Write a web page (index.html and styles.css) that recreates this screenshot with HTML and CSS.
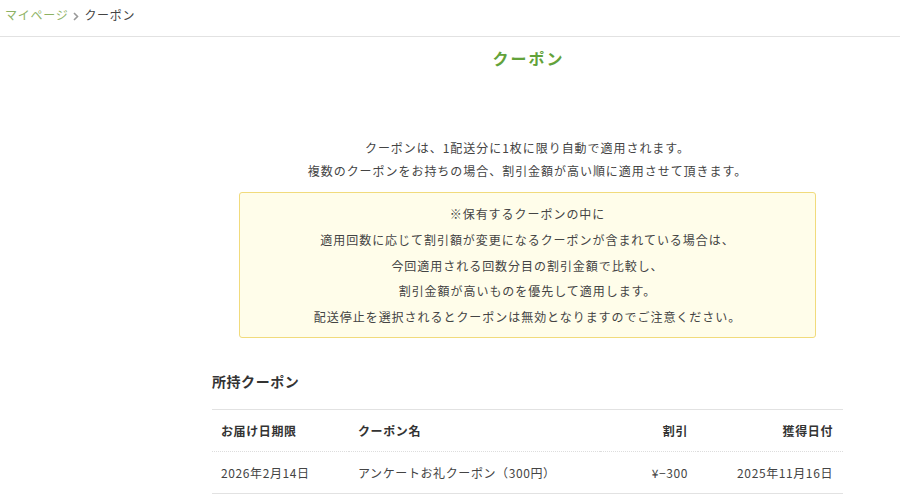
FILE: index.html
```html
<!DOCTYPE html>
<html lang="ja">
<head>
  <meta charset="UTF-8" />
  <meta name="viewport" content="width=device-width, initial-scale=1.0" />
  <title>クーポン | マイページ</title>
  <link rel="stylesheet" href="styles.css">
</head>
<body>
  <!-- Breadcrumb -->
  <nav class="breadcrumb">
    <a href="#">マイページ</a>
    <span class="crumb-sep">
      <svg width="6" height="9" viewBox="0 0 6 9"><path d="M1 1l3.5 3.5L1 8" fill="none" stroke="#999" stroke-width="1.6"/></svg>
    </span>
    <span class="crumb-current">クーポン</span>
  </nav>

  <main class="container">
    <h1 class="page-title">クーポン</h1>

    <div class="lead">
      <p>クーポンは、1配送分に1枚に限り自動で適用されます。</p>
      <p>複数のクーポンをお持ちの場合、割引金額が高い順に適用させて頂きます。</p>
    </div>

    <!-- Notice -->
    <div class="notice">
      <p>※保有するクーポンの中に</p>
      <p>適用回数に応じて割引額が変更になるクーポンが含まれている場合は、</p>
      <p>今回適用される回数分目の割引金額で比較し、</p>
      <p>割引金額が高いものを優先して適用します。</p>
      <p>配送停止を選択されるとクーポンは無効となりますのでご注意ください。</p>
    </div>

    <!-- Owned coupons -->
    <h2 class="section-title">所持クーポン</h2>
    <table class="coupon-table">
      <thead>
        <tr>
          <th class="col-limit">お届け日期限</th>
          <th class="col-name">クーポン名</th>
          <th class="col-discount num">割引</th>
          <th class="col-date num">獲得日付</th>
        </tr>
      </thead>
      <tbody>
        <tr>
          <td>2026年2月14日</td>
          <td>アンケートお礼クーポン（300円）</td>
          <td class="num">¥−300</td>
          <td class="num">2025年11月16日</td>
        </tr>
      </tbody>
    </table>
  </main>
</body>
</html>
```

FILE: styles.css
```css
/* Global */
* {
  box-sizing: border-box;
}
body {
  margin: 0;
  background: #fff;
  color: #333;
  font-family: "Noto Sans CJK JP", "Noto Sans", sans-serif;
  font-size: 12px;
  letter-spacing: 0.08em;
}
p {
  margin: 0;
}

/* Breadcrumb */
.breadcrumb {
  height: 37px;
  padding: 6px 5px 0;
  border-bottom: 1px solid #e2e2e2;
  display: flex;
  align-items: flex-start;
  gap: 5px;
  line-height: 18px;
  letter-spacing: 0.06em;
}
.breadcrumb a {
  color: #8db264;
  text-decoration: none;
}
.crumb-sep {
  display: flex;
  align-items: center;
  height: 18px;
  padding-top: 2px;
}
.crumb-current {
  color: #444;
}

/* Main column */
.container {
  width: 631px;
  margin-left: 212px;
}
.page-title {
  margin: 9px 0 0;
  padding-left: 2px;
  text-align: center;
  color: #62a23a;
  font-size: 16px;
  line-height: 24px;
  font-weight: bold;
  letter-spacing: 2px;
}
.lead {
  margin-top: 66px;
  text-align: center;
  line-height: 23px;
  color: #444;
}

/* Notice box */
.notice {
  width: 577px;
  margin: 10px auto 0;
  padding: 8px 10px 7px;
  background: #fffdea;
  border: 1px solid #f1db7c;
  border-radius: 3px;
  text-align: center;
  line-height: 25.8px;
  color: #444;
}

/* Coupon table */
.section-title {
  margin: 33px 0 0;
  font-size: 14px;
  line-height: 20px;
  font-weight: bold;
  color: #333;
  letter-spacing: 0.04em;
}
.coupon-table {
  width: 100%;
  margin-top: 18px;
  border-collapse: collapse;
  border-top: 1px solid #e2e2e2;
}
.coupon-table th,
.coupon-table td {
  height: 42px;
  padding: 0 10px 0 9px;
  text-align: left;
  vertical-align: middle;
  color: #333;
  font-size: 12px;
  letter-spacing: 0.05em;
}
.coupon-table th {
  font-weight: bold;
  border-bottom: 1px dotted #ddd;
}
.coupon-table td {
  color: #444;
  border-bottom: 1px solid #e2e2e2;
}
.coupon-table .num {
  text-align: right;
}
.col-limit { width: 137px; }
.col-discount { width: 98px; }
.col-date { width: 145px; }
```
